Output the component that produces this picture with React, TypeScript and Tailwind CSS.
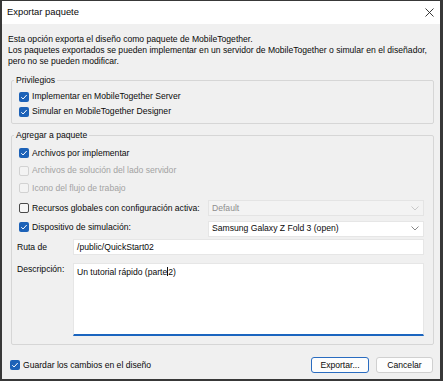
import React from "react";

function Check({ checked, disabled }: { checked?: boolean; disabled?: boolean }) {
  if (checked) {
    return (
      <span className="inline-flex h-[10px] w-[10px] shrink-0 items-center justify-center rounded-[2px] bg-[#1d62b8]">
        <svg width="8" height="8" viewBox="0 0 8 8">
          <path d="M1.3 4.2 L3.1 6 L6.7 2" fill="none" stroke="white" strokeWidth="1" />
        </svg>
      </span>
    );
  }
  return (
    <span
      className={
        "inline-block h-[10px] w-[10px] shrink-0 rounded-[2px] border " +
        (disabled ? "border-[#d2d2d2] bg-[#f3f3f3]" : "border-[#4a4a4a] bg-[#f7f7f7]")
      }
    />
  );
}

function Chevron({ color }: { color: string }) {
  return (
    <svg width="8" height="5" viewBox="0 0 8 5">
      <path d="M0.5 0.5 L4 4 L7.5 0.5" fill="none" stroke={color} strokeWidth="0.9" />
    </svg>
  );
}

export default function App() {
  return (
    <div
      className="flex h-[381px] w-[443px] flex-col border-t border-b-2 border-l-2 border-r-[3px] border-[#383838] bg-[#f0f0f0] text-[8.6px] text-[#0a0a0a]"
      style={{ fontFamily: '"Liberation Sans", Arial, sans-serif' }}
    >
      <div className="flex h-[23px] shrink-0 items-center justify-between bg-white pl-[5px] pr-[6px]">
        <span className="text-[9.4px]">Exportar paquete</span>
        <svg width="9" height="9" viewBox="0 0 9 9">
          <path d="M0.5 0.5 L8.5 8.5 M8.5 0.5 L0.5 8.5" stroke="#222" strokeWidth="0.9" />
        </svg>
      </div>
      <div className="flex flex-1 flex-col pl-[9px] pr-[6px] pt-[10px]">
        <div className="ml-[-3px] whitespace-nowrap leading-[11px]">
          <div>Esta opción exporta el diseño como paquete de MobileTogether.</div>
          <div>Los paquetes exportados se pueden implementar en un servidor de MobileTogether o simular en el diseñador,</div>
          <div>pero no se pueden modificar.</div>
        </div>

        <fieldset className="mt-[8px] rounded-[2px] border border-[#d6d6d6] pl-[5px] pr-[9px] pt-[3px] pb-[4px]">
          <legend className="ml-[-3px] px-[2px] leading-[11px]">Privilegios</legend>
          <div className="flex flex-col">
            <label className="flex h-[15px] items-center gap-[3px] pl-[2px]">
              <Check checked />
              <span>Implementar en MobileTogether Server</span>
            </label>
            <label className="flex h-[15px] items-center gap-[3px] pl-[2px]">
              <Check checked />
              <span>Simular en MobileTogether Designer</span>
            </label>
          </div>
        </fieldset>

        <fieldset className="mt-[6px] rounded-[2px] border border-[#d6d6d6] pl-[5px] pr-[9px] pt-[3px] pb-[8px]">
          <legend className="ml-[-3px] px-[2px] leading-[11px]">Agregar a paquete</legend>
          <label className="flex h-[18px] items-center gap-[3px] pl-[2px]">
            <Check checked />
            <span>Archivos por implementar</span>
          </label>
          <label className="flex h-[17px] items-center gap-[3px] pl-[2px] text-[#a3a3a3]">
            <Check disabled />
            <span>Archivos de solución del lado servidor</span>
          </label>
          <label className="flex h-[18px] items-center gap-[3px] pl-[2px] text-[#a3a3a3]">
            <Check disabled />
            <span>Icono del flujo de trabajo</span>
          </label>
          <div className="mt-[1px] flex h-[20px] items-center">
            <label className="flex w-[191px] items-center gap-[3px] pl-[2px]">
              <Check />
              <span>Recursos globales con configuración activa:</span>
            </label>
            <div className="flex h-[16px] flex-1 items-center justify-between border border-[#e4e4e4] bg-[#f3f3f3] pl-[3px] pr-[4px] text-[#8e8e8e]">
              <span>Default</span>
              <Chevron color="#c4c4c4" />
            </div>
          </div>
          <div className="mt-[1px] flex h-[19px] items-center">
            <label className="flex w-[191px] items-center gap-[3px] pl-[2px] pb-[2px]">
              <Check checked />
              <span>Dispositivo de simulación:</span>
            </label>
            <div className="flex h-[16px] flex-1 items-center justify-between border border-[#e6e6e6] bg-white pl-[3px] pr-[4px]">
              <span>Samsung Galaxy Z Fold 3 (open)</span>
              <Chevron color="#7a7a7a" />
            </div>
          </div>
          <div className="flex h-[18px] items-center">
            <span className="w-[56px]">Ruta de</span>
            <div className="flex h-[16px] flex-1 items-center border border-[#e6e6e6] bg-white pl-[3px]">
              /public/QuickStart02
            </div>
          </div>
          <div className="mt-[7px] flex">
            <span className="w-[56px] pt-[1px] leading-[11px]">Descripción:</span>
            <div className="h-[73px] flex-1 border border-b-2 border-[#e6e6e6] border-b-[#1b65bf] bg-white pl-[3px] pt-[2px] leading-[11px]">
              Un tutorial rápido (parte<span className="inline-block h-[9px] w-[1px] translate-y-[1px] bg-[#111]" />2)
            </div>
          </div>
        </fieldset>

        <div className="mt-[12px] flex h-[16px] items-center justify-between pr-[1px]">
          <label className="ml-[-1px] flex items-center gap-[3px]">
            <Check checked />
            <span>Guardar los cambios en el diseño</span>
          </label>
          <div className="flex gap-[7px]">
            <button className="flex h-[16px] w-[58px] items-center justify-center rounded-[3px] border border-[#2a6cc0] bg-[#fdfdfd] text-[8.6px]">
              Exportar...
            </button>
            <button className="flex h-[16px] w-[57px] items-center justify-center rounded-[3px] border border-[#d0d0d0] bg-[#fdfdfd] text-[8.6px]">
              Cancelar
            </button>
          </div>
        </div>
      </div>
    </div>
  );
}
